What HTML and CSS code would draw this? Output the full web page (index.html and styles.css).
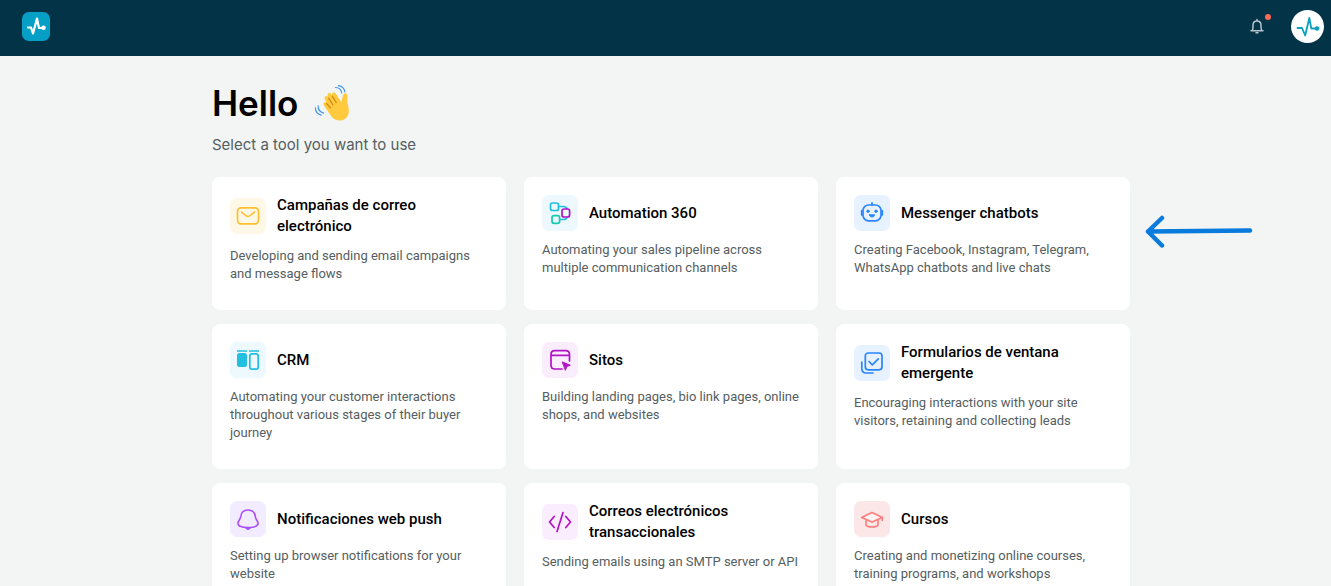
FILE: index.html
```html
<!DOCTYPE html>
<html lang="es">
<head>
<meta charset="utf-8">
<meta name="viewport" content="width=device-width, initial-scale=1">
<title>Hello</title>
<link rel="stylesheet" href="styles.css">
</head>
<body>
<header class="topbar">
  <a class="logo" href="#" aria-label="Home">
    <svg viewBox="0 0 28 29" width="28" height="29" fill="none" stroke="#fff" stroke-width="2.200" stroke-linecap="round" stroke-linejoin="round"><path d="M6 15.500h3l2 6 4-15 2 9.500h4.500"/><circle cx="21.500" cy="15.800" r="1.200" fill="#fff"/></svg>
  </a>
  <div class="topbar-actions">
    <button class="bell" type="button" aria-label="Notifications">
      <svg viewBox="0 0 16 16" width="16" height="16" fill="none" stroke="#b9c6cc" stroke-width="1.500" stroke-linecap="round" stroke-linejoin="round"><path d="M2 12.700h12M3.300 12.500c.8-1.300.7-2.500.7-5C4 4.800 5.500 3 8 3s4 1.800 4 4.500c0 2.500-.1 3.700.7 5M8 1.500V3M7 14.700h2"/></svg>
      <span class="bell-dot"></span>
    </button>
    <button class="avatar" type="button" aria-label="Account">
      <svg viewBox="0 0 33 33" width="33" height="33" fill="none" stroke="#0d9fc0" stroke-width="1.800" stroke-linecap="round" stroke-linejoin="round"><path d="M6.500 18h4.500l3.200 7.500L18.300 8l2 10.500H26"/><circle cx="26" cy="18.500" r="1.400" fill="#0d9fc0"/></svg>
    </button>
  </div>
</header>

<main class="page">
  <div class="content">
    <div class="greeting">
      <h1 class="greeting-title">Hello</h1>
      <svg class="wave" viewBox="0 0 38 38" width="38" height="38" fill="none" stroke-linecap="round" stroke-linejoin="round">
        <path fill="#ffca3e" d="M12 24.500 9.600 21c-1.100-1.800 1.100-3.600 2.600-2.200l.6.600-2.100-4.700c-.9-2.300 1.900-3.700 3.200-1.700l.7 1.200-.9-2.500c-.9-2.500 2.300-3.800 3.500-1.500l.9 1.700-.1-.9c-.6-2.600 2.800-3.300 3.900-1.200l5.400 8.300 1.500-6.200c.6-3.800 5-3.200 4.800.3l-.4 6.100c2 6.200 2.500 11.600-.5 15.100-3.700 4.200-10.200 4-14.500.1z"/>
        <path stroke="#d68a13" stroke-width="1.300" d="m12.600 19.500 3.700 4.200M14.500 14.200l4.300 6.500M18.200 12.200l4 6.300"/>
        <path stroke="#4294e8" stroke-width="1.200" d="M21.500 3.500c3.200.1 5.700 2.300 6.300 5.500M24.500 1.600c3.500.6 5.900 3 6.400 6.200M4.200 21.800c-.2 3.500 1.800 6.400 5.400 7.400M1.400 23.800c.1 3.700 2.300 6.500 5.700 7.300"/>
      </svg>
    </div>
    <p class="subtitle">Select a tool you want to use</p>

    <div class="tools">
      <a class="card" href="#">
        <span class="card-head">
          <span class="icon icon-yellow"><svg viewBox="0 0 36 36" fill="none" stroke="#fdc02f" stroke-width="1.700" stroke-linecap="round" stroke-linejoin="round"><rect x="7.500" y="9.800" width="21" height="16" rx="3.500"/><path d="M11.500 14c4 3.700 5 4.500 6.500 4.500s2.500-.8 6.500-4.500"/></svg></span>
          <span class="card-title">Campañas de correo electrónico</span>
        </span>
        <span class="card-text">Developing and sending email campaigns and message flows</span>
      </a>

      <a class="card" href="#">
        <span class="card-head">
          <span class="icon icon-cyan"><svg viewBox="0 0 36 36" fill="none" stroke="#21bfe0" stroke-width="1.700" stroke-linecap="round"><rect x="8.500" y="8" width="8" height="7.500" rx="2"/><path d="M17 11.500h4.500c2 0 3 .8 3.500 2.300M18.500 24.500h3c2 0 3-.6 3.500-2"/><rect x="10" y="20.700" width="7.600" height="7.600" rx="2" stroke="#19c9b0"/><rect x="20" y="14" width="7.600" height="8" rx="2" stroke="#b312c6"/></svg></span>
          <span class="card-title">Automation 360</span>
        </span>
        <span class="card-text">Automating your sales pipeline across multiple communication channels</span>
      </a>

      <div class="highlight">
        <a class="card" href="#">
          <span class="card-head">
            <span class="icon icon-blue"><svg viewBox="0 0 36 36" fill="none" stroke="#2b85fb" stroke-width="1.700" stroke-linecap="round" stroke-linejoin="round"><rect x="9" y="10" width="18" height="15.800" rx="5.500"/><path d="M18 7.800V10M7.700 15.500v4.500M28.300 15.500v4.500"/><circle cx="14" cy="16.200" r="1.200" fill="#2b85fb" stroke-width="1"/><circle cx="22" cy="16.200" r="1.200" fill="#2b85fb" stroke-width="1"/><path fill="#2b85fb" stroke-width="1" d="M15.500 19.800h5c0 3-5 3-5 0z"/></svg></span>
            <span class="card-title">Messenger chatbots</span>
          </span>
          <span class="card-text">Creating Facebook, Instagram, Telegram, WhatsApp chatbots and live chats</span>
        </a>
        <svg class="arrow" viewBox="0 0 108 34" width="108" height="34" fill="none" stroke="#087bdc" stroke-width="4.500" stroke-linecap="round" stroke-linejoin="round"><path d="M105 15.500 3 16.500M17 3 3 16.500 17 30.500"/></svg>
      </div>

      <a class="card" href="#">
        <span class="card-head">
          <span class="icon icon-cyan"><svg viewBox="0 0 36 36" fill="none" stroke="#21bfe0" stroke-width="1.700"><path d="M7 9h10M19 9h10"/><rect x="7" y="11" width="10" height="14" rx="2.500" fill="#21bfe0" stroke="none"/><rect x="19.800" y="11.800" width="8.400" height="15.400" rx="2.200"/></svg></span>
          <span class="card-title">CRM</span>
        </span>
        <span class="card-text">Automating your customer interactions throughout various stages of their buyer journey</span>
      </a>

      <a class="card" href="#">
        <span class="card-head">
          <span class="icon icon-pink"><svg viewBox="0 0 36 36" fill="none" stroke="#b312c6" stroke-width="1.700" stroke-linecap="round" stroke-linejoin="round"><path d="M27.500 19v-6.500c0-2.500-1.300-3.800-3.800-3.800H12.800C10.300 8.700 9 10 9 12.500v10.700c0 2.500 1.300 3.800 3.800 3.800H20M9 13.300h18.500"/><path fill="#b312c6" stroke-width="1" d="m20.500 20 7.800 3.200-3.500 1.300-1.300 3.500z"/></svg></span>
          <span class="card-title">Sitos</span>
        </span>
        <span class="card-text">Building landing pages, bio link pages, online shops, and websites</span>
      </a>

      <a class="card" href="#">
        <span class="card-head">
          <span class="icon icon-blue"><svg viewBox="0 0 36 36" fill="none" stroke="#2b85fb" stroke-width="1.700" stroke-linecap="round" stroke-linejoin="round"><rect x="11.300" y="8" width="16.700" height="16.800" rx="3"/><path d="m15 16.500 3.300 3.300 6-6M7.800 17v6.500c0 3 1.500 4.500 4.500 4.500H19"/></svg></span>
          <span class="card-title">Formularios de ventana emergente</span>
        </span>
        <span class="card-text">Encouraging interactions with your site visitors, retaining and collecting leads</span>
      </a>

      <a class="card" href="#">
        <span class="card-head">
          <span class="icon icon-violet"><svg viewBox="0 0 36 36" fill="none" stroke="#ab4df8" stroke-width="1.600" stroke-linejoin="round"><path d="M18 9c-4.600 0-7 2.800-7.300 6.800-.2 2.500-2.700 3.700-2.700 6.800C8 25.600 12 26.500 18 26.500s10-.9 10-3.900c0-3.100-2.500-4.300-2.700-6.800C25 11.800 22.600 9 18 9z"/><path fill="#ab4df8" stroke-width="1" d="M15.500 27h5c-1 1.800-4 1.800-5 0z"/></svg></span>
          <span class="card-title">Notificaciones web push</span>
        </span>
        <span class="card-text">Setting up browser notifications for your website</span>
      </a>

      <a class="card" href="#">
        <span class="card-head">
          <span class="icon icon-pink"><svg viewBox="0 0 36 36" fill="none" stroke="#b312c6" stroke-width="1.700" stroke-linecap="round" stroke-linejoin="round"><path d="M12.200 12.500 7.500 18l4.700 5.500M23.800 12.500l4.700 5.500-4.700 5.500M21 8.500l-6 19"/></svg></span>
          <span class="card-title">Correos electrónicos transaccionales</span>
        </span>
        <span class="card-text">Sending emails using an SMTP server or API</span>
      </a>

      <a class="card" href="#">
        <span class="card-head">
          <span class="icon icon-red"><svg viewBox="0 0 36 36" fill="none" stroke="#fb7d7b" stroke-width="1.600" stroke-linecap="round" stroke-linejoin="round"><path fill="#fff5f5" d="m18 11.500 10.300 5L18 21 7.700 16.500z"/><path d="M12 19v5c1.500 2.700 10.500 2.700 12 0v-5M28.300 16.500v3"/></svg></span>
          <span class="card-title">Cursos</span>
        </span>
        <span class="card-text">Creating and monetizing online courses, training programs, and workshops</span>
      </a>
    </div>
  </div>
</main>
</body>
</html>
```
FILE: styles.css
```css
* {
  box-sizing: border-box;
}

html {
  scrollbar-width: none;
}

body {
  margin: 0;
  min-height: 100vh;
  background: #f2f5f4;
  color: #000;
  font-family: Roboto, "Liberation Sans", sans-serif;
}

.topbar {
  display: flex;
  align-items: center;
  justify-content: space-between;
  height: 56px;
  padding: 0 7px 4px 22px;
  background: #023346;
}

.logo {
  display: block;
  width: 28px;
  height: 29px;
  border-radius: 7px;
  background: #069fc5;
}

.logo svg,
.bell svg,
.avatar svg,
.icon svg {
  display: block;
}

.topbar-actions {
  display: flex;
  align-items: center;
  gap: 26px;
}

.bell,
.avatar {
  padding: 0;
  border: 0;
  background: none;
  cursor: pointer;
}

.bell {
  position: relative;
}

.bell-dot {
  position: absolute;
  top: -4px;
  right: -6px;
  width: 6px;
  height: 6px;
  border-radius: 50%;
  background: #fa6b59;
}

.avatar {
  width: 33px;
  height: 33px;
  border-radius: 50%;
  background: #fff;
}

.page {
  padding: 25px 0 24px 11px;
}

.content {
  max-width: 918px;
  margin: 0 auto;
}

.greeting {
  display: flex;
  align-items: center;
  gap: 16px;
}

.greeting-title {
  margin: 0;
  font-family: Inter, "Liberation Sans", sans-serif;
  font-size: 35px;
  font-weight: 600;
  line-height: 44px;
}

.subtitle {
  margin: 10px 0 22px;
  color: #555e61;
  font-family: Inter, "Liberation Sans", sans-serif;
  font-size: 15px;
  line-height: 20px;
}

.tools {
  display: grid;
  grid-template-columns: repeat(3, 1fr);
  gap: 14px 18px;
}

.highlight {
  display: grid;
  position: relative;
}

.arrow {
  position: absolute;
  top: 38px;
  left: calc(100% + 15px);
}

.card {
  display: flex;
  flex-direction: column;
  gap: 10px;
  padding: 18px 14px 27px 18px;
  border-radius: 8px;
  background: #fff;
  color: inherit;
  text-decoration: none;
}

.card-head {
  display: flex;
  align-items: center;
  gap: 11px;
}

.card-title {
  max-width: 180px;
  font-size: 15px;
  font-weight: 500;
  line-height: 21px;
}

.card-text {
  color: #555e61;
  font-size: 13px;
  line-height: 18px;
}

.icon {
  flex: none;
  width: 36px;
  height: 36px;
  border-radius: 7px;
}

.icon-yellow { background: #fff8e7; }
.icon-cyan { background: #edf9fe; }
.icon-blue { background: #e6f2ff; }
.icon-pink { background: #faeefe; }
.icon-violet { background: #f1ecff; }
.icon-red { background: #fbe7e7; }
```
